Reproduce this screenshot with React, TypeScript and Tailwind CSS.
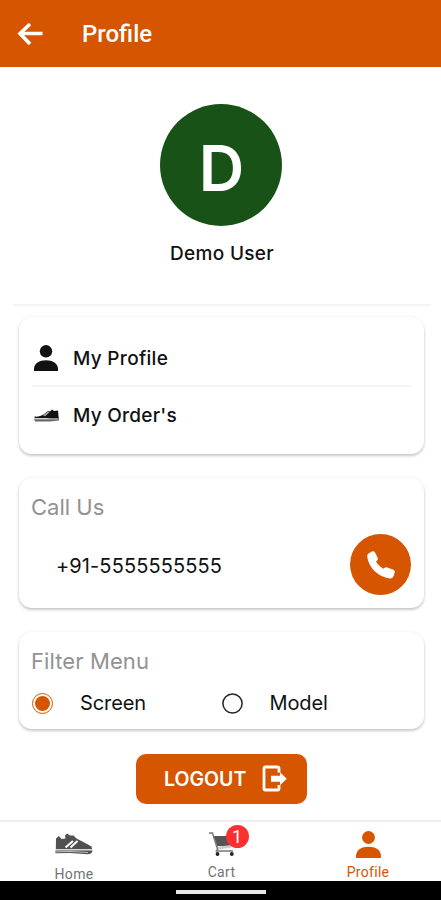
import { useState } from 'react'
import type { ReactNode } from 'react'

function PersonIcon({ className }: { className?: string }) {
  return (
    <svg viewBox="0 0 24 26" fill="currentColor" className={className}>
      <circle cx="12" cy="6.3" r="6.2" />
      <path d="M0 26v-1.9C0 18 5.5 15.2 12 15.2S24 18 24 24.100V26z" />
    </svg>
  )
}

function BackIcon() {
  return (
    <svg viewBox="0 0 26 24" fill="none" stroke="currentColor" className="w-[26px] h-6">
      <path d="M13 2 3 11.5l10 10.5M3 11.5h22.500" strokeWidth="3.6" />
    </svg>
  )
}

function OrderShoeIcon() {
  return (
    <svg viewBox="0 0 25 14" className="w-[25px] h-3.5">
      <path d="M.5 7.5C4 8 7 7 9.5 5.5L14 2l2 .5L18 .5l2 1.500 4-.5.7 7.500H.7z" fill="#111" />
      <path d="M9 6.5l5-4 1.500.8-4.500 4z" fill="#aaa" />
      <path d="M0 9.8h13l3-.8h9v2.500l-9 1H1z" fill="#666" />
      <path d="M.5 10h24" stroke="#ccc" strokeWidth=".8" />
    </svg>
  )
}

function HomeShoeIcon() {
  return (
    <svg viewBox="0 0 38 22" className="w-[38px] h-[22px] shrink-0">
      <path d="M1 5.5 4 3l2.500 3 4-.5-.5-3L12 .5l3 2h3.500l3 3L32 11l4.500 2.500.8 2.800H.8z" fill="#505050" />
      <path d="m10.500 14.500 7.500-6.500M15.500 14.500l7-6.500" stroke="#fff" strokeWidth="2" />
      <path d="M.5 17.300h37c0 2.700-2 3.900-5 3.900L15 19.900.5 20.200z" fill="#505050" />
      <path d="M.5 16.900h37M1 18.800l15-.3 17 1" fill="none" stroke="#ddd" strokeWidth=".8" />
    </svg>
  )
}

function CartIcon() {
  return (
    <svg viewBox="0 0 26 26" className="w-[26px] h-[26px]">
      <path d="M4.500 5H24l-1 10H8z" fill="#555" />
      <path d="M8 15.800 22.500 14v2.500L8 18.800z" fill="#ccc" />
      <path d="M0 2h3.500l5 16-1 2H24" fill="none" stroke="#777" strokeWidth="1.5" />
      <circle cx="8.5" cy="23" r="1.9" fill="#222" />
      <circle cx="22.8" cy="23" r="1.9" fill="#222" />
    </svg>
  )
}

function PhoneIcon() {
  return (
    <svg viewBox="0 0 28 28" fill="currentColor" className="w-7 h-7">
      <path d="M1.500 2.500 4.500.7C6.300-.1 7.500.5 8.300 2l2.200 4.500c.7 1.500.3 2.700-.9 3.600L9 10.600c1.800 3 4.300 5.400 7.300 7.200l.7-.6c1-.9 2-1.200 3.300-.8l5.500 2c1.800.7 2.300 1.800 1.800 3.400l-1 3.200c-.7 1.800-1.900 2.600-3.800 2.400C11.500 26.300 1.500 16.500.3 5.800.1 4.300.4 3.200 1.500 2.500z" />
    </svg>
  )
}

function LogoutIcon() {
  return (
    <svg viewBox="0 0 25 28" className="w-[25px] h-7">
      <path d="M17 7.500V3.500Q17 2 15.500 2h-12Q2 2 2 3.500v20Q2 25 3.500 25h12Q17 25 17 23.500V20" fill="none" stroke="currentColor" strokeWidth="2.8" />
      <path d="M9 10.800h9V7.300l6.800 6.400-6.800 6.500v-3.500H9z" fill="currentColor" />
    </svg>
  )
}

function Card({ children, className }: { children: ReactNode; className: string }) {
  return (
    <section className={`ml-[19px] mr-[17px] rounded-[13px] bg-white px-[13px] shadow-[0_2px_3px_rgba(0,0,0,0.2),0_0_3px_rgba(0,0,0,0.07)] ${className}`}>
      {children}
    </section>
  )
}

export default function App() {
  const [filter, setFilter] = useState('Screen')

  return (
    <div className="flex h-[900px] w-[441px] flex-col overflow-hidden bg-white font-['Inter',sans-serif] text-[#111]">
      <header className="flex h-[67px] shrink-0 items-center bg-[#d65500] pl-[17px] text-white">
        <button aria-label="Back"><BackIcon /></button>
        <h1 className="ml-[39px] font-['Roboto',sans-serif] text-[24px] font-medium leading-8">Profile</h1>
      </header>

      <main className="flex flex-1 flex-col">
        <div className="ml-[13px] mr-[10px] flex h-[239px] shrink-0 flex-col items-center border-b-2 border-[#f4f4f4] pt-[37px]">
          <div className="mr-[2px] flex size-[122px] items-center justify-center rounded-full bg-[#185217] pl-px pt-[6px] text-[63px] font-semibold leading-none text-white">
            D
          </div>
          <p className="mt-[14px] text-[19px] font-medium leading-7 tracking-[0.3px]">Demo User</p>
        </div>

        <Card className="mt-[11px] h-[137px] shrink-0 pt-[14px]">
          <button className="flex h-[56px] w-full items-center border-b-2 border-[#f4f4f4] text-left text-[19px] font-medium tracking-[0.3px]">
            <PersonIcon className="ml-[2px] mr-[15px] w-6 h-[26px]" />
            <span className="pt-[2px]">My Profile</span>
          </button>
          <button className="flex h-[57px] w-full items-center text-left text-[19px] font-medium tracking-[0.25px]">
            <span className="ml-[2px] mr-[14px]"><OrderShoeIcon /></span>
            <span className="pt-[2px]">My Order's</span>
          </button>
        </Card>

        <Card className="mt-6 h-[130px] shrink-0 pt-[13px]">
          <h2 className="-ml-px text-[22px] leading-8 text-[#929292]">Call Us</h2>
          <div className="mt-[11px] flex h-[61px] items-center justify-between pl-6">
            <span className="pt-[2px] text-[20px] tracking-[0.1px]">+91-5555555555</span>
            <button aria-label="Call" className="flex size-[61px] items-center justify-center rounded-full bg-[#d65500] text-white">
              <PhoneIcon />
            </button>
          </div>
        </Card>

        <Card className="mt-6 h-[97px] shrink-0 pt-[13px]">
          <h2 className="-ml-px text-[22px] leading-8 tracking-[0.1px] text-[#929292]">Filter Menu</h2>
          <div className="mt-[11px] flex">
            {['Screen', 'Model'].map((name) => (
              <button key={name} className="flex w-[190px] items-center text-[20px] leading-[30px]" onClick={() => setFilter(name)}>
                {filter === name ? (
                  <span className="flex size-[21px] items-center justify-center rounded-full border border-[#d65500]">
                    <span className="size-[15px] rounded-full bg-[#d65500]" />
                  </span>
                ) : (
                  <svg viewBox="0 0 21 21" className="size-[21px]">
                    <circle cx="10.5" cy="10.5" r="9.6" fill="none" stroke="#222" strokeWidth="1.5" />
                  </svg>
                )}
                <span className="ml-[27px] tracking-[-0.1px]">{name}</span>
              </button>
            ))}
          </div>
        </Card>

        <button className="ml-[136px] mt-[25px] flex h-[50px] w-[171px] shrink-0 items-center rounded-[10px] bg-[#d65500] pl-[28px] text-[19.5px] font-semibold text-white">
          <span className="pt-[2px]">LOGOUT</span>
          <span className="ml-[16px]"><LogoutIcon /></span>
        </button>
      </main>

      <nav className="flex h-[61px] shrink-0 border-t-2 border-[#f0f0f0] font-['Roboto',sans-serif] text-[14px] text-[#737373]">
        <a className="flex w-[148px] flex-col items-center pt-[11px]">
          <HomeShoeIcon />
          <span className="mt-[9px] leading-5 tracking-[0.3px]">Home</span>
        </a>
        <a className="flex w-[147px] flex-col items-center pt-[9px]">
          <span className="relative">
            <CartIcon />
            <span className="absolute -top-[6px] left-[17px] flex size-[23px] items-center justify-center rounded-full bg-[#fc3030] text-[18px] leading-none text-white">1</span>
          </span>
          <span className="mt-[5px] leading-5 tracking-[0.3px]">Cart</span>
        </a>
        <a className="flex w-[146px] flex-col items-center pt-[9px] text-[#d65500]">
          <PersonIcon className="w-[25px] h-[27px] shrink-0" />
          <span className="mt-[4px] leading-5 tracking-[0.3px]">Profile</span>
        </a>
      </nav>
      <footer className="flex h-[19px] shrink-0 justify-center bg-black pt-[9px]">
        <div className="h-1 w-[90px] bg-[#e7e7e7]" />
      </footer>
    </div>
  )
}
